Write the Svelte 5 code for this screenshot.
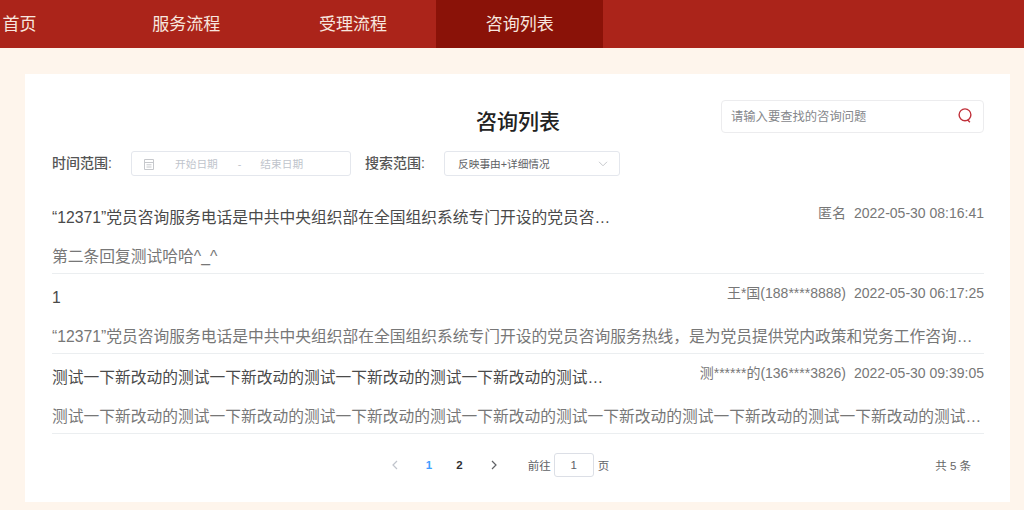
<script lang="ts">
  const navItems = ["首页", "服务流程", "受理流程", "咨询列表"];
  const long = "“12371”党员咨询服务电话是中共中央组织部在全国组织系统专门开设的党员咨询服务热线,是为党员提供党内政策和党务工作咨询服务的专用电话";
  const test = "测试一下新改动的".repeat(12);

  const rows = [
    { title: long, meta: "匿名", time: "2022-05-30 08:16:41", reply: "第二条回复测试哈哈^_^", titleWidth: 562 },
    { title: "1", meta: "王*国(188****8888)", time: "2022-05-30 06:17:25", reply: long.replace("热线,", "热线，"), titleWidth: 562 },
    { title: test, meta: "测******的(136****3826)", time: "2022-05-30 09:39:05", reply: test, titleWidth: 556 },
  ];
</script>

<div class="app" lang="zh-CN">
  <nav class="nav">
    {#each navItems as item, i (item)}
      <div class="nav-item" class:active={i === 3}>{item}</div>
    {/each}
  </nav>

  <main class="page">
    <section class="card">
      <header class="head">
        <span></span>
        <h1>咨询列表</h1>
        <div class="search">
          <span>请输入要查找的咨询问题</span>
          <svg width="14" height="15" viewBox="0 0 14 15" fill="none" stroke="#c0303a" stroke-width="1.4">
            <circle cx="7" cy="6.8" r="5.9" />
            <path d="M9.5 11.8l2.4 2.4" />
          </svg>
        </div>
      </header>

      <div class="filters">
        <span class="label">时间范围:</span>
        <div class="field dates">
          <svg width="12" height="12" viewBox="0 0 12 12" fill="none" stroke="#c6c8cc">
            <path d="M1.5 1.5h9v10h-9zM1.5 4.5h9M3.5 6.8h5M3.5 9h5" />
          </svg>
          <span class="start">开始日期</span>
          <span class="dash">-</span>
          <span class="end">结束日期</span>
        </div>
        <span class="label second">搜索范围:</span>
        <div class="field select">
          <span>反映事由+详细情况</span>
          <svg width="10" height="6" viewBox="0 0 10 6" fill="none" stroke="#c6c8cc">
            <path d="M1 .8l4 4 4-4" />
          </svg>
        </div>
      </div>

      <div class="list">
        {#each rows as row, i (i)}
          <article class="row">
            <div class="line">
              <span class="title" style="max-width: {row.titleWidth}px">{row.title}</span>
              <span class="meta">{row.meta}<span class="time">{row.time}</span></span>
            </div>
            <div class="reply">{row.reply}</div>
          </article>
        {/each}
      </div>

      <footer class="pager">
        <div class="pages">
          <svg class="arrow" width="8" height="10" viewBox="0 0 8 10" fill="none" stroke="#c0c4cc" stroke-width="1.2">
            <path d="M6 1L2 5l4 4" />
          </svg>
          <b class="current">1</b>
          <b>2</b>
          <svg class="arrow" width="8" height="10" viewBox="0 0 8 10" fill="none" stroke="#606266" stroke-width="1.2">
            <path d="M2 1l4 4-4 4" />
          </svg>
          <span class="jump">前往<span class="page-input">1</span>页</span>
        </div>
        <span class="total">共 5 条</span>
      </footer>
    </section>
  </main>
</div>

<style>
  :global(body) {
    background: #fef5ec;
    font-family: "Liberation Sans", "Noto Sans CJK SC", sans-serif;
    overflow: hidden;
  }
  .nav {
    display: flex;
    height: 48px;
    margin-left: -64px;
    background: #ab241a;
    color: #f7e6df;
    font-size: 17px;
    line-height: 49px;
  }
  .nav-item {
    width: 166.8px;
    text-align: center;
  }
  .nav-item.active {
    background: #8a1208;
  }
  .page {
    padding: 26px 14px 8px 25px;
  }
  .card {
    height: 428px;
    padding: 0 26px 0 27px;
    box-sizing: border-box;
    background: #fff;
  }
  .head {
    display: grid;
    grid-template-columns: 1fr auto 1fr;
    align-items: start;
    height: 77px;
  }
  h1 {
    margin: 33px 0 0;
    font-size: 21px;
    line-height: 30px;
    font-weight: 500;
    color: #222;
  }
  .search {
    display: flex;
    align-items: center;
    justify-content: space-between;
    justify-self: end;
    box-sizing: border-box;
    width: 263px;
    height: 33px;
    margin-top: 26px;
    padding: 0 11px 2px 9px;
    border: 1px solid #ececee;
    border-radius: 4px;
    font-size: 12.3px;
    color: #85878b;
  }
  .filters {
    display: flex;
    align-items: center;
    height: 25px;
    font-size: 14px;
    color: #555;
  }
  .label {
    width: 79px;
    padding-bottom: 3px;
    font-weight: 500;
  }
  .label.second {
    width: 79px;
    margin-left: 14px;
  }
  .field {
    display: flex;
    align-items: center;
    box-sizing: border-box;
    height: 25px;
    border: 1px solid #e4e7ed;
    border-radius: 3px;
    font-size: 10.7px;
  }
  .dates {
    width: 220px;
    padding-left: 11px;
    color: #c0c4cc;
  }
  .start {
    margin-left: 20px;
  }
  .dash {
    margin-left: 20px;
  }
  .end {
    margin-left: 19px;
  }
  .select {
    justify-content: space-between;
    width: 176px;
    padding: 0 11px 0 13px;
    color: #606266;
  }
  .list {
    margin-top: 18px;
  }
  .row {
    height: 80px;
    box-sizing: border-box;
    border-bottom: 1px solid #ebeef0;
  }
  .line {
    display: flex;
    justify-content: space-between;
    height: 40px;
    line-height: 47px;
    font-size: 15.75px;
    color: #4a4a4a;
  }
  .title,
  .reply {
    overflow: hidden;
    white-space: nowrap;
    text-overflow: ellipsis;
  }
  .reply {
    padding-top: 6px;
    line-height: 34px;
    font-size: 15.75px;
    color: #777;
  }
  .meta {
    flex: none;
    margin-top: -4px;
    font-size: 14px;
    color: #777;
  }
  .time {
    margin-left: 8px;
  }
  .pager {
    position: relative;
    display: flex;
    justify-content: center;
    align-items: center;
    height: 62px;
    font-size: 11.5px;
    color: #606266;
  }
  .pages {
    display: flex;
    align-items: center;
    margin-left: -36px;
  }
  .current {
    margin-left: 27px;
    color: #409eff;
  }
  .pages b + b {
    margin-left: 24px;
    color: #303133;
  }
  .pages b + .arrow {
    margin-left: 27px;
  }
  .jump {
    display: flex;
    align-items: center;
    margin-left: 30px;
  }
  .page-input {
    box-sizing: border-box;
    width: 40px;
    height: 24px;
    margin: 0 4px 0 3px;
    border: 1px solid #dcdfe6;
    border-radius: 3px;
    text-align: center;
    line-height: 22px;
  }
  .total {
    position: absolute;
    right: 13px;
    top: 23px;
    color: #666;
  }
</style>
